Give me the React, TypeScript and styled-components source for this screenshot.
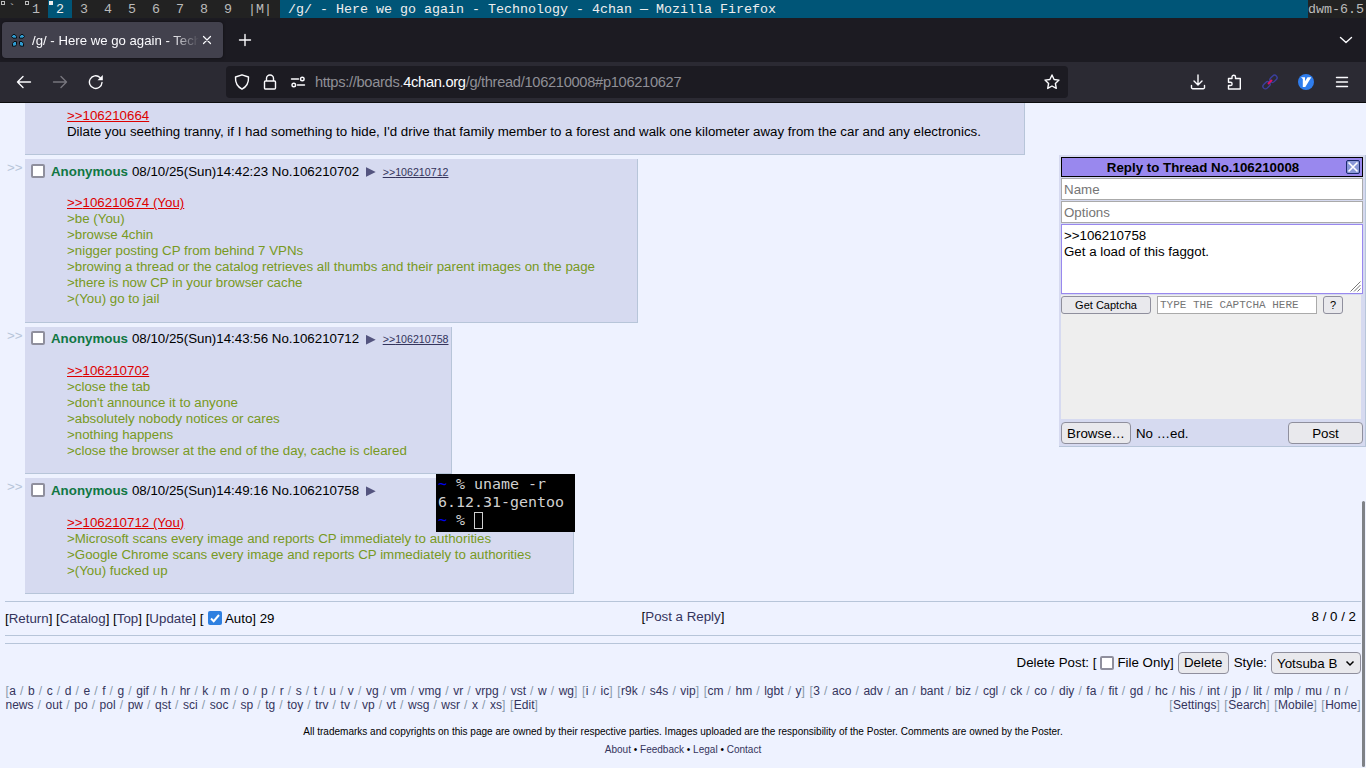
import React from 'react';
import styled, { createGlobalStyle } from 'styled-components';

const colors = {
  page: '#eef2ff',
  post: '#d6daf0',
  line: '#b7c5d9',
  link: '#34345c',
  quote: '#789922',
  quoteLink: '#dd0000',
  name: '#117743',
  chrome: '#1c1b22',
  toolbar: '#2b2a33',
  icon: '#fbfbfe',
};

const GlobalStyle = createGlobalStyle`
  * {
    box-sizing: border-box;
  }

  body {
    margin: 0;
    overflow: hidden;
    background: ${colors.page};
    font-family: 'Liberation Sans', Arial, sans-serif;
    font-size: 13.325px;
    line-height: 16px;
    color: #000;
  }

  button,
  input,
  textarea {
    font-family: inherit;
    margin: 0;
  }
`;

const Screen = styled.div`
  position: relative;
  width: 1366px;
  height: 768px;
  overflow: hidden;
  display: flex;
  flex-direction: column;
`;

/* window manager bar */

const StatusBar = styled.div`
  display: flex;
  height: 18px;
  flex: none;
  background: #222;
  color: #bbb;
  font: 13.333px/20px 'Liberation Mono', monospace;
  white-space: pre;
`;

const Tag = styled.div<{ $active?: boolean }>`
  position: relative;
  width: 24px;
  height: 18px;
  text-align: center;
  background: ${(props) => (props.$active ? '#005577' : 'transparent')};
  color: ${(props) => (props.$active ? '#eee' : '#bbb')};
`;

const TagMark = styled.i<{ $filled?: boolean }>`
  position: absolute;
  left: 1px;
  top: 1px;
  width: 4px;
  height: 4px;
  border: 1px solid ${(props) => (props.$filled ? '#eee' : '#bbb')};
  background: ${(props) => (props.$filled ? '#eee' : 'transparent')};
`;

const LayoutSymbol = styled.div`
  width: 40px;
  text-align: center;
`;

const WindowTitle = styled.div`
  flex: 1;
  height: 18px;
  padding-left: 8px;
  background: #005577;
  color: #eee;
`;

const StatusText = styled.div`
  width: 58px;
`;

/* browser chrome */

const TabStrip = styled.div`
  display: flex;
  flex: none;
  align-items: center;
  height: 44px;
  padding: 0 11px 0 2px;
  background: ${colors.chrome};
`;

const Tab = styled.div`
  display: flex;
  align-items: center;
  width: 221px;
  height: 36px;
  padding: 0 8px;
  border-radius: 4px;
  background: #42414d;
  color: ${colors.icon};
  box-shadow: 0 0 3px rgba(0, 0, 0, 0.5);
`;

const TabLabel = styled.span`
  width: 167px;
  margin-left: 6px;
  padding-top: 2px;
  white-space: nowrap;
  font-size: 13.2px;
  mask-image: linear-gradient(to left, transparent, black 28px);
`;

const StripIcon = styled.span<{ $left: number }>`
  display: flex;
  margin-left: ${(props) => props.$left}px;
`;

const NavBar = styled.div`
  display: flex;
  flex: none;
  align-items: center;
  height: 41px;
  padding: 0 16px;
  background: ${colors.toolbar};
  border-bottom: 1px solid #0c0c0d;
`;

const NavButtons = styled.div`
  display: flex;
  gap: 20px;
  width: 210px;
`;

const UrlBar = styled.div`
  display: flex;
  align-items: center;
  width: 842px;
  height: 32px;
  padding: 0 8px;
  border-radius: 4px;
  background: ${colors.chrome};
  color: #8f8f96;
  font-size: 14.67px;
  letter-spacing: -0.31px;

  & svg + svg {
    margin-left: 12px;
  }
`;

const Url = styled.span`
  flex: 1;
  margin-left: 9px;

  & b {
    font-weight: normal;
    color: ${colors.icon};
  }
`;

const Extensions = styled.div`
  display: flex;
  gap: 20px;
  margin-left: auto;
`;

/* thread */

const Page = styled.main`
  flex: 1;
  padding: 0 5px;
  overflow: hidden;
`;

const PostRow = styled.div`
  display: flex;
  margin-bottom: 4px;
`;

const SideArrows = styled.div`
  width: 20px;
  padding: 1px 0 0 2px;
  color: ${colors.line};
`;

const PostBox = styled.article`
  padding: 2px 2.4px 2px 2px;
  background: ${colors.post};
  border: 1px solid ${colors.line};
  border-left: none;
  border-top: none;
`;

const ClippedPost = styled(PostBox)`
  display: flex;
  align-items: flex-end;
  width: 1000px;
  height: 52px;
  margin: 0 0 4px 20px;
`;

const Checkbox = styled.span`
  width: 14px;
  height: 14px;
  border: 2px solid #8f8f9d;
  border-radius: 2px;
  background: #fff;
`;

const PostInfo = styled.header`
  display: flex;
  align-items: center;
  height: 20px;
  padding: 1px 0 0 4px;
  white-space: pre;

  & ${Checkbox} {
    margin-bottom: 2px;
  }
`;

const PosterName = styled.b`
  margin: 0 4px 0 6px;
  color: ${colors.name};
`;

const MenuArrow = styled.span`
  width: 10px;
  height: 10px;
  margin: 1px 0 0 6.5px;
  background: #54547f;
  clip-path: polygon(0 0, 100% 50%, 0 100%);
`;

const Backlink = styled.a`
  margin-left: 7px;
  font-size: 10.66px;
  color: ${colors.link};
  text-decoration: underline;
`;

const Message = styled.blockquote`
  margin: 14.333px 40px 12.333px;
  white-space: nowrap;
`;

const QuoteLink = styled.a`
  color: ${colors.quoteLink};
  text-decoration: underline;
`;

const Line = styled.div<{ $quote?: boolean }>`
  color: ${(props) => (props.$quote ? colors.quote : '#000')};
`;

const Divider = styled.hr<{ $top?: number }>`
  height: 1px;
  margin: ${(props) => props.$top ?? 0}px 0 0;
  border: none;
  background: ${colors.line};
`;

const ThreadNav = styled.nav`
  display: grid;
  grid-template-columns: 1fr auto 1fr;
  height: 33px;
  padding-top: 7px;
  white-space: pre;
`;

const Link = styled.a`
  color: ${colors.link};
`;

const AutoUpdate = styled.span`
  display: flex;
  align-items: center;
  height: 16px;
  gap: 2.5px;

  & svg {
    margin: 0 0 2px 5px;
  }
`;

const ThreadLinks = styled.div`
  display: flex;
  padding-top: 2px;
`;

const ThreadStats = styled.div`
  text-align: right;
  padding-right: 5px;
`;

const DeleteForm = styled.div`
  display: flex;
  justify-content: flex-end;
  align-items: center;
  height: 22px;
  margin-top: 8px;
`;

const FormText = styled.span<{ $left?: number; $right?: number }>`
  margin: 0 ${(props) => props.$right ?? 4}px 0 ${(props) => props.$left ?? 0}px;
  padding-top: 1px;
`;

const Button = styled.button<{ $width: number; $small?: boolean }>`
  width: ${(props) => props.$width}px;
  height: ${(props) => (props.$small ? 18 : 22)}px;
  padding: 0;
  border: 1px solid #8f8f9d;
  border-radius: ${(props) => (props.$small ? 3 : 4)}px;
  background: #e9e9ed;
  color: #000;
  font-size: ${(props) => (props.$small ? 11 : 13.333)}px;
`;

const StyleSelect = styled(Button)`
  display: flex;
  align-items: center;
  justify-content: space-between;
  padding: 1px 5px 0;
`;

/* separators and brackets are set a little looser than the board names */
const BoardNav = styled.div`
  margin-top: 10px;
  font-size: 12px;
  line-height: 14px;
  letter-spacing: 0.5px;
  word-spacing: 0.25px;
  color: #89a;
  white-space: nowrap;

  & a {
    letter-spacing: 0;
  }
`;

const BoardLine = styled.div`
  display: flex;
  justify-content: space-between;

  & span:first-child {
    padding-left: 0.5px;
  }
`;

const Footer = styled.footer`
  margin-top: 11px;
  font-size: 10.02px;
  line-height: 18px;
  text-align: center;
`;

const Scrollbar = styled.div`
  position: absolute;
  right: 1px;
  top: 501px;
  width: 3px;
  height: 266px;
  border-radius: 2px;
  background: #7f8287;
`;

/* terminal over the page */

const Terminal = styled.pre`
  position: absolute;
  left: 436px;
  top: 474px;
  width: 139px;
  height: 58px;
  margin: 0;
  padding: 1px 2px;
  background: #000;
  color: #d0d0d0;
  font: 14.95px/18px 'DejaVu Sans Mono', monospace;

  & i {
    color: #0000ee;
    font-style: normal;
  }
`;

const Cursor = styled.span`
  display: inline-block;
  width: 9px;
  height: 17px;
  margin-top: 1px;
  border: 1px solid #d0d0d0;
  vertical-align: top;
`;

/* quick reply */

const QuickReply = styled.section`
  position: absolute;
  left: 1059px;
  top: 155px;
  width: 307px;
  height: 292px;
  padding: 2px;
  background: ${colors.post};
  border: 1px solid ${colors.line};
  border-left: none;
  border-top: none;
  display: flex;
  flex-direction: column;
`;

const ReplyHeader = styled.header`
  display: flex;
  align-items: center;
  width: 302px;
  height: 20px;
  padding-right: 2px;
  border: 1px solid #000;
  background: #9988ee;
  font-weight: bold;

  & span {
    flex: 1;
    padding: 1px 2px 0 0;
    text-align: center;
  }
`;

const Field = styled.input`
  width: 302px;
  height: 22px;
  margin-top: 1px;
  padding: 0 2px;
  border: 1px solid #aaa;
  font-size: 13.333px;

  &::placeholder {
    color: #757575;
  }
`;

const Comment = styled.div`
  display: flex;
  align-items: flex-end;
  justify-content: space-between;
  width: 302px;
  height: 70px;
  margin-top: 1px;
  padding: 3px 1px 1px 2px;
  border: 1px solid #9988ee;
  background: #fff;

  & p {
    align-self: flex-start;
    margin: 0;
  }
`;

const Captcha = styled.div`
  display: flex;
  align-items: flex-start;
  gap: 6px;
  width: 300px;
  height: 124px;
  margin-top: 1px;
  padding-top: 1px;
  background: #eee;
`;

const CaptchaInput = styled.input`
  width: 160px;
  height: 18px;
  padding: 0 2px;
  border: 1px solid #aaa;
  font: 11px 'Liberation Mono', monospace;

  &::placeholder {
    color: #757575;
  }
`;

const FileRow = styled.div`
  display: flex;
  align-items: center;
  width: 302px;
  margin-top: 3px;

  & span {
    flex: 1;
    margin-left: 5px;
    padding-top: 1px;
  }
`;

interface IconProps {
  color?: string;
  children: React.ReactNode;
}

const Icon: React.FC<IconProps> = ({ children, color = colors.icon }) => (
  <svg
    width="16"
    height="16"
    viewBox="0 0 16 16"
    fill="none"
    stroke={color}
    strokeWidth="1.4"
    strokeLinecap="round"
    strokeLinejoin="round"
  >
    {children}
  </svg>
);

const boardGroups = [
  'a b c d e f g gif h hr k m o p r s t u v vg vm vmg vr vrpg vst w wg',
  'i ic',
  'r9k s4s vip',
  'cm hm lgbt y',
];
const topBoards = '3 aco adv an bant biz cgl ck co diy fa fit gd hc his int jp lit mlp mu n';
const bottomBoards =
  'news out po pol pw qst sci soc sp tg toy trv tv vp vt wsg wsr x xs';

const Boards = ({ list }: { list: string }) => (
  <>
    {list.split(' ').map((board, i) => (
      <React.Fragment key={board}>
        {i > 0 && ' / '}
        <Link>{board}</Link>
      </React.Fragment>
    ))}
  </>
);

interface PostProps {
  time: string;
  no: string;
  backlink?: string;
  replyTo: string;
  lines: string[];
}

const posts: PostProps[] = [
  {
    time: '14:42:23',
    no: '106210702',
    backlink: '106210712',
    replyTo: '106210674 (You)',
    lines: [
      'be (You)',
      'browse 4chin',
      'nigger posting CP from behind 7 VPNs',
      'browing a thread or the catalog retrieves all thumbs and their parent images on the page',
      'there is now CP in your browser cache',
      '(You) go to jail',
    ],
  },
  {
    time: '14:43:56',
    no: '106210712',
    backlink: '106210758',
    replyTo: '106210702',
    lines: [
      'close the tab',
      "don't announce it to anyone",
      'absolutely nobody notices or cares',
      'nothing happens',
      'close the browser at the end of the day, cache is cleared',
    ],
  },
  {
    time: '14:49:16',
    no: '106210758',
    replyTo: '106210712 (You)',
    lines: [
      'Microsoft scans every image and reports CP immediately to authorities',
      'Google Chrome scans every image and reports CP immediately to authorities',
      '(You) fucked up',
    ],
  },
];

const Post: React.FC<PostProps> = ({ time, no, backlink, replyTo, lines }) => (
  <PostRow>
    <SideArrows>&gt;&gt;</SideArrows>
    <PostBox>
      <PostInfo>
        <Checkbox />
        <PosterName>Anonymous</PosterName>
        08/10/25(Sun){time} No.{no}
        <MenuArrow />
        {backlink && <Backlink>&gt;&gt;{backlink}</Backlink>}
      </PostInfo>
      <Message>
        <Line>
          <QuoteLink>&gt;&gt;{replyTo}</QuoteLink>
        </Line>
        {lines.map((line) => (
          <Line $quote key={line}>
            &gt;{line}
          </Line>
        ))}
      </Message>
    </PostBox>
  </PostRow>
);

const App: React.FC = () => (
  <Screen>
    <GlobalStyle />
    <StatusBar>
      <Tag>
        <TagMark />`
      </Tag>
      {[1, 2, 3, 4, 5, 6, 7, 8, 9].map((n) => (
        <Tag key={n} $active={n === 2}>
          {n < 3 && <TagMark $filled={n === 2} />}
          {n}
        </Tag>
      ))}
      <LayoutSymbol>|M|</LayoutSymbol>
      <WindowTitle>/g/ - Here we go again - Technology - 4chan — Mozilla Firefox</WindowTitle>
      <StatusText>dwm-6.5</StatusText>
    </StatusBar>

    <TabStrip>
      <Tab>
        <svg width="16" height="16" viewBox="0 0 16 16" fill="#2f9bd0" stroke="#0a0d12">
          <path d="M1.500 4.500 3 2.500h2l1.500 2v1.700H3Z" />
          <path d="M14.500 4.500 13 2.500h-2l-1.500 2v1.700H13Z" />
          <path d="M2.500 14.200V11.500L4 9.500h2.500v3L5.500 14.200Z" />
          <path d="M13.500 14.200V11.500L12 9.500H9.500v3l1 1.700Z" />
        </svg>
        <TabLabel>/g/ - Here we go again - Tech</TabLabel>
        <Icon>
          <path d="M4.500 4.500l7 7M11.500 4.500l-7 7" strokeWidth="1.200" />
        </Icon>
      </Tab>
      <StripIcon $left={14}>
        <Icon>
          <path d="M8 2.500v11M2.500 8h11" />
        </Icon>
      </StripIcon>
      <StripIcon $left={1085}>
        <Icon>
          <path d="M2.500 5.500 8 10.500l5.500-5" />
        </Icon>
      </StripIcon>
    </TabStrip>

    <NavBar>
      <NavButtons>
        <Icon>
          <path d="M14.500 8H1.500M7 2.500 1.500 8 7 13.500" />
        </Icon>
        <Icon color="#77767e">
          <path d="M1.500 8h13M9 2.500 14.500 8 9 13.500" />
        </Icon>
        <Icon>
          <path d="M14 8.500a6.300 6.300 0 1 1-2-5" />
          <path d="M14.800 1v5.300H9.500z" fill={colors.icon} stroke="none" />
        </Icon>
      </NavButtons>
      <UrlBar>
        <Icon>
          <path d="M8 .8 14.500 3c.3 5-1.500 9.500-6.500 12.200C3 12.500 1.200 8 1.500 3Z" />
        </Icon>
        <Icon>
          <path d="M4.500 7V4.500a3.500 3.500 0 0 1 7 0V7M3.500 7h9a1 1 0 0 1 1 1v6a1 1 0 0 1-1 1h-9a1 1 0 0 1-1-1V8a1 1 0 0 1 1-1Z" />
        </Icon>
        <Icon>
          <path d="M1.500 5h7M7.500 11h7" />
          <circle cx="12.300" cy="5" r="1.800" />
          <circle cx="3.800" cy="11" r="1.800" />
        </Icon>
        <Url>
          https://boards.<b>4chan.org</b>/g/thread/106210008#p106210627
        </Url>
        <Icon>
          <path d="m8 1 2.100 4.500 4.900.6-3.600 3.400.9 4.900L8 12l-4.300 2.400.9-4.900L1 6.100l4.900-.6Z" />
        </Icon>
      </UrlBar>
      <Extensions>
        <Icon>
          <path d="M8 1v9.500M4 7l4 4 4-4M1.500 11.500v2a1.200 1.200 0 0 0 1.200 1.200h10.600a1.200 1.200 0 0 0 1.200-1.200v-2" />
        </Icon>
        <Icon>
          <path d="M2.500 15V11.500h2a1.600 1.600 0 0 0 0-3.200h-2V4.500H6V3a1.700 1.700 0 0 1 3.500 0v1.500h4.800V15Z" />
        </Icon>
        <Icon color="#3b3f9e">
          <rect x="7.500" y="2.300" width="8" height="5" rx="2.500" transform="rotate(-45 11.500 4.800)" />
          <rect x=".5" y="8.800" width="8" height="5" rx="2.500" transform="rotate(-45 4.500 11.300)" />
          <path d="m6.500 9.500 3-3" stroke="#e0115f" strokeWidth="1.800" />
        </Icon>
        <svg width="16" height="16" viewBox="0 0 16 16">
          <circle cx="8" cy="8" r="8" fill="#2f7ded" />
          <path d="M3 3.300h4v4L9.500 3.300h3.800L7.300 13H4.800V5Z" fill="#fff" />
        </svg>
        <Icon>
          <path d="M2.500 3.500h11M2.500 8h11M2.500 12.500h11" />
        </Icon>
      </Extensions>
    </NavBar>

    <Page>
      <ClippedPost>
        <Message>
          <Line>
            <QuoteLink>&gt;&gt;106210664</QuoteLink>
          </Line>
          <Line>
            Dilate you seething tranny, if I had something to hide, I&apos;d drive that family
            member to a forest and walk one kilometer away from the car and any electronics.
          </Line>
        </Message>
      </ClippedPost>
      {posts.map((post) => (
        <Post key={post.no} {...post} />
      ))}

      <Divider $top={7} />
      <ThreadNav>
        <ThreadLinks>
          [<Link>Return</Link>] [<Link>Catalog</Link>] [<Link>Top</Link>] [<Link>Update</Link>] [
          <AutoUpdate>
            <svg width="14" height="14" viewBox="0 0 14 14">
              <rect width="14" height="14" rx="2" fill="#2f80e0" />
              <path d="m3 7.500 2.700 2.700L11 4" fill="none" stroke="#fff" strokeWidth="2" />
            </svg>
            Auto] 29
          </AutoUpdate>
        </ThreadLinks>
        <div>
          [<Link>Post a Reply</Link>]
        </div>
        <ThreadStats>8 / 0 / 2</ThreadStats>
      </ThreadNav>
      <Divider />
      <Divider $top={7} />
      <DeleteForm>
        <FormText>Delete Post: [</FormText>
        <Checkbox />
        <FormText $left={3}>File Only]</FormText>
        <Button $width={51}>Delete</Button>
        <FormText $left={5}>Style:</FormText>
        <StyleSelect $width={90}>
          Yotsuba B
          <svg width="10" height="10" viewBox="0 0 10 10" fill="none" stroke="#000" strokeWidth="1.500">
            <path d="m1.500 3.500 3.500 3.500 3.500-3.500" />
          </svg>
        </StyleSelect>
      </DeleteForm>
      <BoardNav>
        <BoardLine>
          <span>
            {boardGroups.map((group) => (
              <React.Fragment key={group}>
                [<Boards list={group} />]{' '}
              </React.Fragment>
            ))}
            [<Boards list={topBoards} /> /
          </span>
        </BoardLine>
        <BoardLine>
          <span>
            <Boards list={bottomBoards} />] [<Link>Edit</Link>]
          </span>
          <span>
            [<Link>Settings</Link>] [<Link>Search</Link>] [<Link>Mobile</Link>] [<Link>Home</Link>]
          </span>
        </BoardLine>
      </BoardNav>
      <Footer>
        <div>
          All trademarks and copyrights on this page are owned by their respective parties. Images
          uploaded are the responsibility of the Poster. Comments are owned by the Poster.
        </div>
        <div>
          <Link>About</Link> • <Link>Feedback</Link> • <Link>Legal</Link> • <Link>Contact</Link>
        </div>
      </Footer>
    </Page>

    <QuickReply>
      <ReplyHeader>
        <span>Reply to Thread No.106210008</span>
        <svg width="14" height="14" viewBox="0 0 14 14">
          <rect x=".5" y=".5" width="13" height="13" rx="1.500" fill="#8a98d8" stroke="#1b2a6b" />
          <path d="m2.500 2.500 9 9M11.500 2.500l-9 9" stroke="#fff" strokeWidth="1.600" />
        </svg>
      </ReplyHeader>
      <Field placeholder="Name" />
      <Field placeholder="Options" />
      <Comment>
        <p>
          &gt;&gt;106210758
          <br />
          Get a load of this faggot.
        </p>
        <svg width="11" height="11" viewBox="0 0 11 11" stroke="#777" fill="none">
          <path d="M.5 10.500l10-10M4 10.500l6.500-6.500M7.500 10.500l3-3" />
        </svg>
      </Comment>
      <Captcha>
        <Button $width={90} $small>
          Get Captcha
        </Button>
        <CaptchaInput placeholder="TYPE THE CAPTCHA HERE" />
        <Button $width={20} $small>
          ?
        </Button>
      </Captcha>
      <FileRow>
        <Button $width={70}>Browse…</Button>
        <span>No …ed.</span>
        <Button $width={75}>Post</Button>
      </FileRow>
    </QuickReply>

    <Terminal>
      <i>~</i> % uname -r{'\n'}6.12.31-gentoo{'\n'}
      <i>~</i> % <Cursor />
    </Terminal>
    <Scrollbar />
  </Screen>
);

export default App;
